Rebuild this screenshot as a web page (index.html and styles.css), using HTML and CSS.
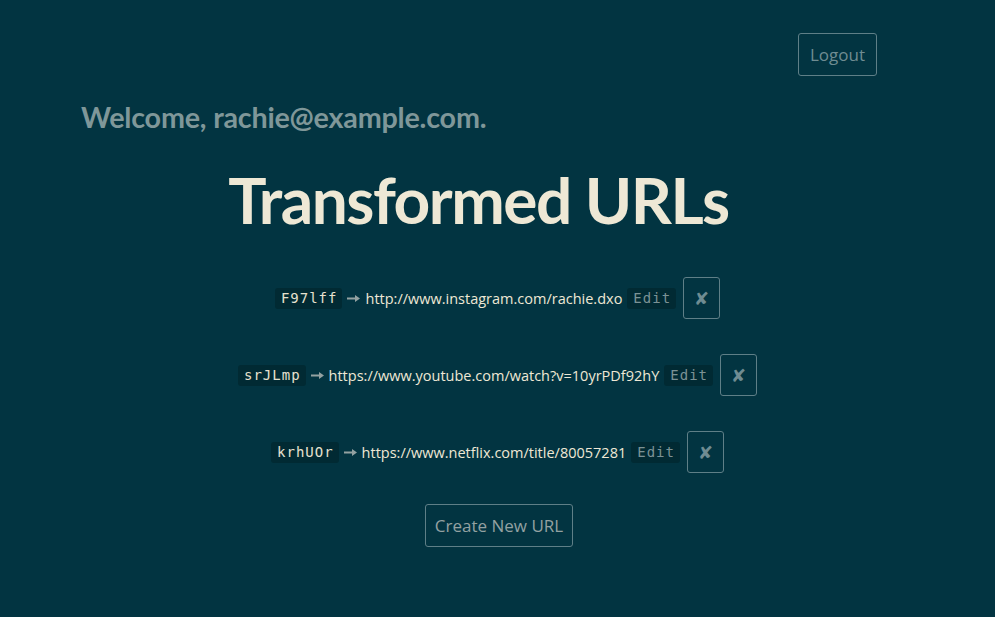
FILE: index.html
```html
<!DOCTYPE html>
<html>
<head>
<meta charset="utf-8">
<link rel="stylesheet" href="styles.css">
</head>
<body>
<div class="page">
  <header class="topbar">
    <button class="btn logout">Logout</button>
  </header>
  <h3 class="welcome">Welcome, rachie@example.com.</h3>
  <h1 class="title">Transformed URLs</h1>
  <ul class="urls">
    <li class="row">
      <code class="short">F97lff</code>
      <svg class="arrow" width="13" height="7" viewBox="0 0 13 7"><path d="M0 2.4h8V0l5 3.5-5 3.5V4.6H0z" fill="#93a1a1"/></svg>
      <span class="long">http://www.instagram.com/rachie.dxo</span>
      <code class="edit">Edit</code>
      <button class="btn del">&#10008;</button>
    </li>
    <li class="row">
      <code class="short">srJLmp</code>
      <svg class="arrow" width="13" height="7" viewBox="0 0 13 7"><path d="M0 2.4h8V0l5 3.5-5 3.5V4.6H0z" fill="#93a1a1"/></svg>
      <span class="long">https://www.youtube.com/watch?v=10yrPDf92hY</span>
      <code class="edit">Edit</code>
      <button class="btn del">&#10008;</button>
    </li>
    <li class="row">
      <code class="short">krhUOr</code>
      <svg class="arrow" width="13" height="7" viewBox="0 0 13 7"><path d="M0 2.4h8V0l5 3.5-5 3.5V4.6H0z" fill="#93a1a1"/></svg>
      <span class="long">https://www.netflix.com/title/80057281</span>
      <code class="edit">Edit</code>
      <button class="btn del">&#10008;</button>
    </li>
  </ul>
  <div class="actions">
    <button class="btn create">Create New URL</button>
  </div>
</div>
</body>
</html>
```
FILE: styles.css
```css
html, body {
  margin: 0;
  padding: 0;
  background: #023441;
  height: 100%;
}
body {
  font-family: "Open Sans", "Noto Sans", sans-serif;
  color: #eee8d5;
}
.page {
  padding: 33px 0 0 0;
}
.topbar {
  display: flex;
  justify-content: flex-end;
  padding-right: 118px;
}
.btn {
  background: transparent;
  border: 1px solid #5f7f87;
  border-radius: 3px;
  color: #6f8c92;
  font-family: "Open Sans", "Noto Sans", sans-serif;
  cursor: pointer;
}
.logout {
  width: 79px;
  height: 43px;
  font-size: 17px;
  padding: 0;
}
.welcome {
  margin: 24px 0 0 81px;
  font-family: "Lato", "Open Sans", sans-serif;
  font-weight: 700;
  font-size: 28.7px;
  color: #7f9799;
  letter-spacing: -0.2px;
}
.title {
  margin: 26px 0 0 0;
  text-align: center;
  font-family: "Lato", "Open Sans", sans-serif;
  font-size: 64px;
  font-weight: 700;
  color: #eee8d5;
  letter-spacing: -1.5px;
  padding-right: 38px;
  line-height: 80px;
}
.urls {
  list-style: none;
  margin: 37px 0 0 0;
  padding: 0;
  display: flex;
  flex-direction: column;
  gap: 35px;
}
.row {
  display: flex;
  align-items: center;
  justify-content: center;
  gap: 5px;
  height: 42px;
  font-size: 14.5px;
}
code {
  font-family: "DejaVu Sans Mono", monospace;
  font-size: 14px;
  letter-spacing: 1px;
  background: #012a33;
  border-radius: 3px;
  padding: 1px 5px 1px 6px;
  line-height: 19px;
}
.short { color: #e6e1cf; }
.edit { color: #7b9295; }
.arrow {
  display: block;
}
.long {
  font-family: "Open Sans", "Noto Sans", sans-serif;
  color: #eee8d5;
}
.del {
  width: 37px;
  height: 42px;
  padding: 0;
  font-size: 18px;
  color: #6f8c92;
  margin-left: 2px;
}
.actions {
  display: flex;
  justify-content: center;
  margin-top: 31px;
  padding-left: 3px;
}
.create {
  width: 148px;
  height: 43px;
  font-size: 17px;
  color: #93a1a1;
  padding: 0;
}
```
